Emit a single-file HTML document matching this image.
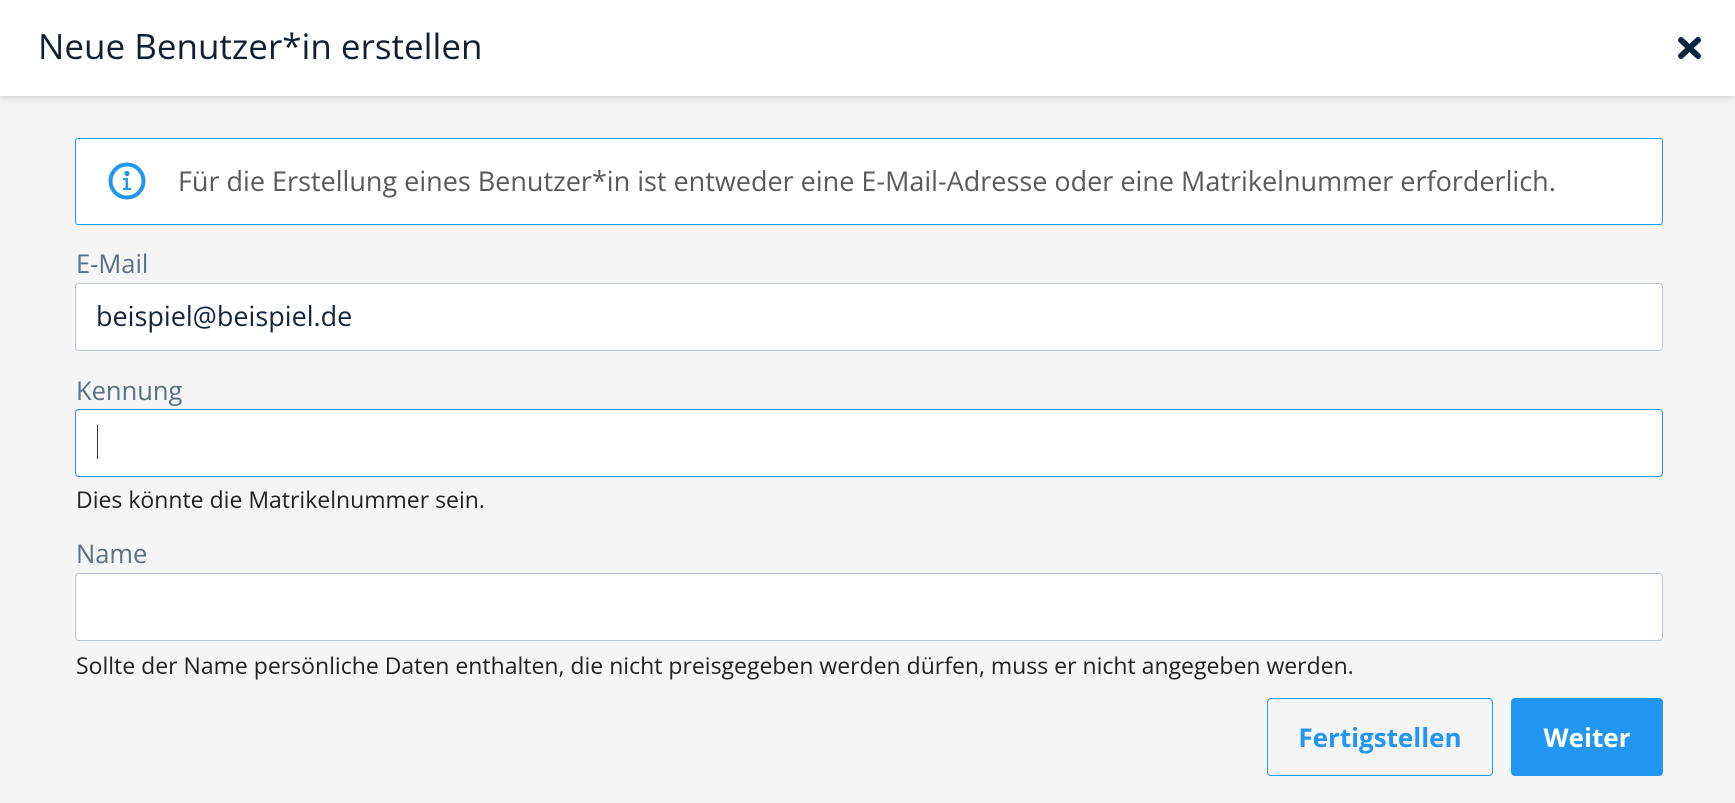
<!DOCTYPE html>
<html><head><meta charset="utf-8"><style>
*{margin:0;padding:0;box-sizing:border-box}
body{width:1735px;height:803px;background:#f5f5f5;font-family:"Open Sans","Liberation Sans",sans-serif;position:relative;overflow:hidden}
.hdr{position:absolute;left:0;top:0;width:1735px;height:96px;background:#fff;box-shadow:0 2px 6px rgba(0,0,0,.15)}
.ttl{position:absolute;left:38px;top:27px;font-size:35px;color:#0f2035;line-height:40px}
.a{position:absolute;white-space:nowrap}
.info{left:75px;top:138px;width:1588px;height:87px;border:1px solid #2196f3;border-radius:3px;background:#fff}
.lbl{font-size:25.5px;color:#5b6f86;left:76px;line-height:28px}
.inp{left:75px;width:1588px;height:68px;background:#fff;border:1px solid #b9c6d6;border-radius:4px}
.hint{left:76px;font-size:23px;color:#222;line-height:26px}
.btn{top:698px;height:78px;border-radius:4px;font-size:26px;font-weight:bold;display:flex;align-items:center;justify-content:center}
</style></head><body>
<div class="hdr"><div class="ttl">Neue Benutzer*in erstellen</div>
<svg class="a" style="left:1677px;top:36px" width="25" height="24" viewBox="0 0 25 24"><path d="M4 4L21 20M21 4L4 20" stroke="#0f2540" stroke-width="6" stroke-linecap="round"/></svg></div>
<div class="a info">
<svg class="a" style="left:31px;top:22px" width="40" height="40" viewBox="0 0 40 40"><circle cx="20" cy="20" r="16.5" fill="none" stroke="#2196f3" stroke-width="4"/><circle cx="20" cy="12.5" r="2.6" fill="#2196f3"/><path d="M16 17h5v10h3v2h-8v-2h2.5v-8h-2.5z" fill="#2196f3"/></svg>
<div class="a" style="left:102px;top:27px;font-size:27px;color:#5a5a5a;line-height:30px">Für die Erstellung eines Benutzer*in ist entweder eine E-Mail-Adresse oder eine Matrikelnummer erforderlich.</div></div>
<div class="a lbl" style="top:250px">E-Mail</div>
<div class="a inp" style="top:283px"><div class="a" style="left:20px;top:17px;font-size:27px;color:#0f2540;line-height:30px">beispiel@beispiel.de</div></div>
<div class="a lbl" style="top:377px">Kennung</div>
<div class="a inp" style="top:409px;border-color:#2196f3"><div class="a" style="left:21px;top:15px;width:1px;height:34px;background:#333"></div></div>
<div class="a hint" style="top:486px">Dies könnte die Matrikelnummer sein.</div>
<div class="a lbl" style="top:540px">Name</div>
<div class="a inp" style="top:573px"></div>
<div class="a hint" style="top:652px">Sollte der Name persönliche Daten enthalten, die nicht preisgegeben werden dürfen, muss er nicht angegeben werden.</div>
<div class="a btn" style="left:1267px;width:226px;border:1px solid #2196f3;color:#2196f3;background:#f5f5f5">Fertigstellen</div>
<div class="a btn" style="left:1511px;width:152px;background:#2196f3;color:#fff">Weiter</div>
</body></html>
